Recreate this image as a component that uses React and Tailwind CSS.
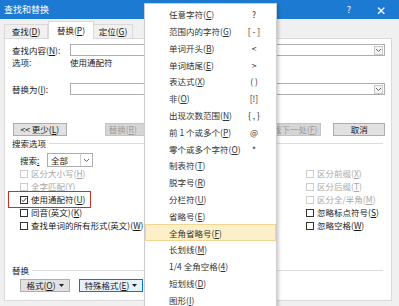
import React from "react";

// letter in brackets, access key underlined
const K = ({ k }) => (
  <>
    (<span className="underline underline-offset-1">{k}</span>)
  </>
);

const menuItems = [
  ["任意字符", "C", "?"],
  ["范围内的字符", "G", "[ - ]"],
  ["单词开头", "B", "<"],
  ["单词结尾", "E", ">"],
  ["表达式", "X", "( )"],
  ["非", "O", "[!]"],
  ["出现次数范围", "N", "{ , }"],
  ["前 1 个或多个", "P", "@"],
  ["零个或多个字符", "O", "*"],
  ["制表符", "T", ""],
  ["脱字号", "R", ""],
  ["分栏符", "U", ""],
  ["省略号", "E", ""],
  ["全角省略号", "F", ""],
  ["长划线", "M", ""],
  ["1/4 全角空格", "4", ""],
  ["短划线", "D", ""],
  ["图形", "I", ""],
];

const Chevron = () => (
  <svg width="7" height="5" viewBox="0 0 7 5">
    <path d="M1 1 L3.5 3.5 L6 1" fill="none" stroke="#555" strokeWidth="0.9" />
  </svg>
);

const Caret = () => (
  <svg width="5" height="3" viewBox="0 0 5 3" className="ml-[3px]">
    <path d="M0 0 H5 L2.5 3 Z" fill="#222" />
  </svg>
);

const ComboInput = () => (
  <div className="flex-1 h-[12px] border border-[#adadad] bg-white flex justify-end items-center pr-[1px]">
    <div className="w-[9px] h-[9px] border border-[#c8c8c8] bg-[#f4f4f4] flex items-center justify-center">
      <Chevron />
    </div>
  </div>
);

const Check = ({ label, k, disabled, checked }) => (
  <div className={`h-[13px] flex items-center gap-[3px] ${disabled ? "text-[#a8a8a8]" : "text-[#1a1a1a]"}`}>
    <div
      className={`w-[8px] h-[8px] border bg-white flex items-center justify-center ${
        disabled ? "border-[#cdcdcd]" : "border-[#333]"
      }`}
    >
      {checked && (
        <svg width="6" height="6" viewBox="0 0 6 6">
          <path d="M0.7 3 L2.3 4.6 L5.3 1" fill="none" stroke="#222" strokeWidth="0.9" />
        </svg>
      )}
    </div>
    <span>
      {label}
      <K k={k} />
    </span>
  </div>
);

const Btn = ({ children, className = "", disabled }) => (
  <div
    className={`h-[13px] border flex items-center justify-center ${
      disabled
        ? "bg-[#d5d5d5] border-[#c4c4c4] text-[#9c9c9c]"
        : "bg-[#e1e1e1] border-[#adadad] text-[#1a1a1a]"
    } ${className}`}
  >
    {children}
  </div>
);

export default function App() {
  return (
    <div className="relative w-[399px] h-[306px] overflow-hidden bg-[#f0f0f0] text-[8.5px] leading-none font-['Noto_Sans_CJK_SC',sans-serif] text-[#1a1a1a]">
      {/* title bar */}
      <div className="h-[19px] bg-[#1c7ad2] text-white flex items-center pl-[4px] pr-[13px]">
        <span className="text-[9px]">查找和替换</span>
        <span className="ml-auto text-[9px]">?</span>
        <span className="ml-[25px] text-[12px] font-light">✕</span>
      </div>

      <div className="pl-[4px] pr-[7px]">
        {/* tabs */}
        <div className="mt-[3px] h-[16px] flex items-end">
          <div className="w-[44px] h-[14px] border border-b-0 border-[#d9d9d9] bg-[#f0f0f0] flex items-center justify-center">
            查找<K k="D" />
          </div>
          <div className="w-[44px] h-[16px] border border-b-0 border-[#d9d9d9] bg-white flex items-center justify-center relative z-10 -mb-px pb-[1px] box-content">
            替换<K k="P" />
          </div>
          <div className="w-[39px] h-[14px] border border-b-0 border-l-0 border-[#d9d9d9] bg-[#f0f0f0] flex items-center justify-center">
            定位<K k="G" />
          </div>
        </div>

        {/* tab panel */}
        <div className="h-[263px] border border-[#d9d9d9] bg-white flex flex-col pl-[7px] pr-[6px]">
          <div className="mt-[5px] h-[12px] flex items-center">
            <span className="w-[58px]">
              查找内容<K k="N" />:
            </span>
            <ComboInput />
          </div>
          <div className="h-[12px] flex items-center">
            <span className="w-[58px]">选项:</span>
            <span>使用通配符</span>
          </div>
          <div className="mt-[15px] h-[12px] flex items-center">
            <span className="w-[58px]">
              替换为<K k="I" />:
            </span>
            <ComboInput />
          </div>

          {/* buttons */}
          <div className="mt-[28px] flex items-center">
            <Btn className="ml-[1px] w-[54px]">
              &lt;&lt; 更少<K k="L" />
            </Btn>
            <Btn disabled className="ml-[38px] w-[74px] !justify-start pl-[3px]">
              替换<K k="R" />
            </Btn>
            {/* 全部替换 sits fully under the menu */}
            <Btn disabled className="ml-[12px] w-[58px]" />
            <Btn disabled className="ml-[12px] w-[62px] !justify-end pr-[3px]">
              查找下一处<K k="F" />
            </Btn>
            <Btn className="ml-[12px] w-[52px]">取消</Btn>
          </div>

          {/* search options */}
          <div className="mt-[2px] h-[10px] flex items-center">
            <span>搜索选项</span>
            <div className="flex-1 h-px bg-[#dcdcdc] ml-[3px] mr-[2px]" />
          </div>
          <div className="mt-[5px] h-[14px] flex items-center pl-[8px]">
            <span className="w-[27px]">
              搜索<span className="underline">:</span>
            </span>
            <div className="w-[46px] h-[14px] border border-[#adadad] bg-white flex items-center">
              <span className="flex-1 pl-[3px]">全部</span>
              <div className="w-[12px] h-full border-l border-[#d0d0d0] flex items-center justify-center">
                <Chevron />
              </div>
            </div>
          </div>
          <div className="flex pl-[8px]">
            <div className="w-[286px]">
              <Check label="区分大小写" k="H" disabled />
              <Check label="全字匹配" k="Y" disabled />
              <div className="relative">
                <Check label="使用通配符" k="U" checked />
                <div className="absolute left-[-12px] top-[-2px] w-[83px] h-[17px] border-[1.5px] border-[#c9302c]" />
              </div>
              <Check label="同音(英文)" k="K" />
              <Check label="查找单词的所有形式(英文)" k="W" />
            </div>
            <div>
              <Check label="区分前缀" k="X" disabled />
              <Check label="区分后缀" k="T" disabled />
              <Check label="区分全/半角" k="M" disabled />
              <Check label="忽略标点符号" k="S" />
              <Check label="忽略空格" k="W" />
            </div>
          </div>

          {/* replace */}
          <div className="mt-[33px] h-[10px] flex items-center">
            <span>替换</span>
            <div className="flex-1 h-px bg-[#dcdcdc] ml-[3px] mr-[2px]" />
          </div>
          <div className="mt-[4px] flex items-center pl-[8px]">
            <Btn className="w-[50px]">
              格式<K k="O" />
              <Caret />
            </Btn>
            <Btn className="ml-[9px] w-[64px] !bg-[#e5f1fb] !border-[#0078d7]">
              特殊格式<K k="E" />
              <Caret />
            </Btn>
            {/* 不限定格式 button, hidden under the menu */}
            <Btn disabled className="ml-[9px] w-[70px]" />
          </div>
        </div>
      </div>

      {/* special format dropdown menu */}
      <div className="absolute left-[144px] top-[3px] w-[133px] h-[320px] bg-white border border-[#cccccc] shadow-[2px_2px_3px_rgba(0,0,0,0.18)] pt-[2px] text-[#333]">
        {menuItems.map(([label, k, sc], i) => (
          <div
            key={i}
            className={`h-[16.8px] flex items-center pl-[23px] border ${
              i === 13 ? "bg-[#fdf0c8] border-[#f1d590]" : "border-transparent"
            }`}
          >
            <span className="flex-1 whitespace-pre">
              {label}
              <K k={k} />
            </span>
            <span className="w-[22px] mr-[10px] text-center whitespace-pre">{sc}</span>
          </div>
        ))}
      </div>
    </div>
  );
}
